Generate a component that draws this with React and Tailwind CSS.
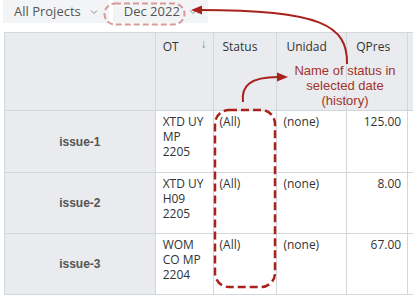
import React from 'react';

const rows = [
  { key: 'issue-1', ot: ['XTD UY', 'MP', '2205'], qpres: '125.00', h: 'h-[62px]' },
  { key: 'issue-2', ot: ['XTD UY', 'H09', '2205'], qpres: '8.00', h: 'h-[61px]' },
  { key: 'issue-3', ot: ['WOM', 'CO MP', '2204'], qpres: '67.00', h: 'h-[61px]' },
];

const cell = 'border-r border-b border-[#d3d6db]';

function Chevron() {
  return (
    <svg width="8" height="6" viewBox="0 0 8 6" className="ml-[9px] mt-[1px]">
      <path d="M1 1.5 L4 4.5 L7 1.5" fill="none" stroke="#8a8f96" strokeWidth="1" />
    </svg>
  );
}

export default function App() {
  return (
    <div className="relative w-[413px] h-[295px] overflow-hidden bg-white font-['Open_Sans',sans-serif] text-[12px] text-[#333]">
      {/* toolbar */}
      <div className="flex gap-[4px] pl-[3px] h-[32px]">
        <div className="flex items-center h-[23px] px-[11px] bg-[#f3f4f5] text-[13px] text-[#555]">
          All Projects
          <Chevron />
        </div>
        <div className="flex items-center h-[23px] px-[11px] bg-[#f3f4f5] text-[13px] text-[#555]">
          Dec 2022
          <Chevron />
        </div>
      </div>

      {/* grid */}
      <div className="ml-[4px] border-l border-t border-[#d3d6db] flex flex-col w-[460px]">
        <div className="flex h-[78px] bg-[#e9ebee]">
          <div className={`${cell} w-[151px]`} />
          <div className={`${cell} w-[58px] relative pl-[7px] pt-[5px]`}>
            OT
            <span className="absolute right-[6px] top-[2px] text-[#888] text-[12px]">↓</span>
          </div>
          <div className={`${cell} w-[64px] pl-[9px] pt-[5px]`}>Status</div>
          <div className={`${cell} w-[70px] pl-[9px] pt-[5px]`}>Unidad</div>
          <div className={`${cell} w-[61px] pl-[9px] pt-[5px]`}>QPres</div>
          <div className={`${cell} w-[56px]`} />
        </div>
        {rows.map((r) => (
          <div key={r.key} className={`flex ${r.h}`}>
            <div className={`${cell} w-[151px] bg-[#e9ebee] flex items-center justify-center font-['Liberation_Sans',sans-serif] font-bold text-[12px] text-[#555]`}>
              {r.key}
            </div>
            <div className={`${cell} w-[58px] pl-[7px] pt-[3px] leading-[15px]`}>
              {r.ot.map((l) => (
                <div key={l}>{l}</div>
              ))}
            </div>
            <div className={`${cell} w-[64px] pl-[6px] pt-[3px] leading-[15px]`}>(All)</div>
            <div className={`${cell} w-[70px] pl-[6px] pt-[3px] leading-[15px]`}>(none)</div>
            <div className={`${cell} w-[61px] pr-[6px] pt-[3px] leading-[15px] text-right`}>{r.qpres}</div>
            <div className={`${cell} w-[56px]`} />
          </div>
        ))}
      </div>

      {/* annotations */}
      <svg className="absolute left-0 top-0 pointer-events-none" width="413" height="295">
        <rect x="104.5" y="3.5" width="80" height="21" rx="10.5" fill="none" stroke="#d79a96" strokeWidth="2" strokeDasharray="6 3" />
        <rect x="215" y="110" width="60" height="177" rx="14" fill="none" stroke="#a8231b" strokeWidth="2.5" strokeDasharray="8 4" />
        <path d="M347 64 C 348 25, 320 10, 200 10" fill="none" stroke="#a8231b" strokeWidth="2" />
        <path d="M191 10 L 202 5.5 L 202 14.5 Z" fill="#a8231b" />
        <path d="M243 102 C 241 86, 250 77, 278 77" fill="none" stroke="#a8231b" strokeWidth="2" />
        <path d="M288 77 L 277 72.5 L 277 81.5 Z" fill="#a8231b" />
      </svg>
      <div className="absolute left-[285px] top-[63px] w-[120px] text-center font-['Liberation_Sans',sans-serif] text-[13px] leading-[15px] text-[#a3322a]">
        <div className="bg-[#e9ebee]/0">Name of status in</div>
        <div>selected date</div>
        <div>(history)</div>
      </div>
    </div>
  );
}
